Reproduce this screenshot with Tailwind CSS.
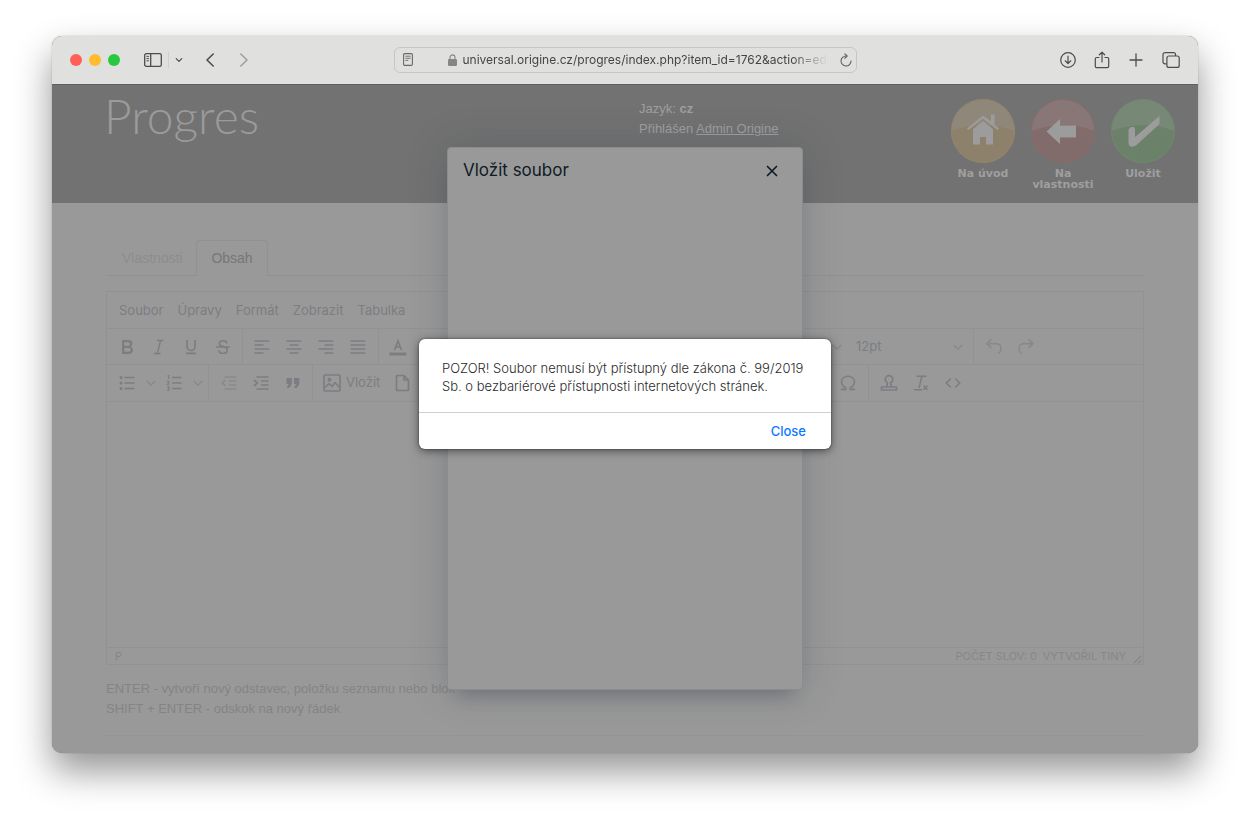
<!DOCTYPE html>
<html lang="cs">
<head>
  <meta charset="UTF-8" />
  <meta name="viewport" content="width=device-width, initial-scale=1.0"/>
  <title>Progres</title>
  <script src="https://cdn.jsdelivr.net/npm/@tailwindcss/browser@4"></script>
</head>

<body class="bg-white font-['Inter',sans-serif] px-[52px] pt-9 pb-16">
  <!-- Browser window -->
  <div class="relative rounded-[10px] overflow-hidden bg-[#999999] shadow-[0_18px_36px_rgba(0,0,0,0.42),0_0_1px_rgba(0,0,0,0.5)]">

    <!-- Title bar -->
    <div class="flex items-center h-[49px] pb-px bg-[#e0e1df] border-b border-[#5f5f5f] text-[#4c4c4c]">
      <div class="flex flex-1 items-center pl-[18px]">
        <div class="flex items-center gap-[7px]">
          <span class="size-3 rounded-full bg-[#ff5f57]"></span>
          <span class="size-3 rounded-full bg-[#febc2e]"></span>
          <span class="size-3 rounded-full bg-[#28c840]"></span>
        </div>
        <button class="ml-6" aria-label="Sidebar">
          <svg class="w-[18px] h-[14px]" viewBox="0 0 18 14" fill="none" stroke="currentColor" stroke-width="1.3"><rect x="0.7" y="0.7" width="16.6" height="12.6" rx="1.6"/><path d="M6.7 1v12"/><path d="M2.5 3.4h2.4M2.5 5.6h2.4M2.5 7.8h2.4" stroke-width="1"/></svg>
        </button>
        <span class="ml-[6px] w-px h-4 bg-[#d0d1cf]"></span>
        <button class="ml-[6px]" aria-label="Tab groups">
          <svg class="w-2 h-2" viewBox="0 0 8 8" fill="none" stroke="currentColor" stroke-width="1.2" stroke-linecap="round" stroke-linejoin="round"><path d="M1.2 2.6 4 5.4l2.8-2.8"/></svg>
        </button>
        <button class="ml-[22px]" aria-label="Back">
          <svg class="w-[10px] h-4" viewBox="0 0 10 16" fill="none" stroke="currentColor" stroke-width="1.6" stroke-linecap="round" stroke-linejoin="round"><path d="M8.2 2 2 8l6.2 6"/></svg>
        </button>
        <button class="ml-6 text-[#9f9f9f]" aria-label="Forward">
          <svg class="w-[10px] h-4" viewBox="0 0 10 16" fill="none" stroke="currentColor" stroke-width="1.6" stroke-linecap="round" stroke-linejoin="round"><path d="M1.8 2 8 8l-6.2 6"/></svg>
        </button>
      </div>
      <div class="flex items-center w-[463px] h-[26px] rounded-md border border-[#c6c7c5] px-2">
        <svg class="w-[10px] h-[13px] shrink-0" viewBox="0 0 10 13" fill="none" stroke="#686868" stroke-width="1.1"><rect x="0.6" y="0.6" width="8.8" height="11.8" rx="1.2"/><path d="M2.3 3.2h5.4M2.3 5.3h5.4M2.3 7.4h3" stroke-width="0.9"/></svg>
        <svg class="w-[9px] h-3 ml-[35px] shrink-0" viewBox="0 0 9 12"><rect x="0" y="5" width="9" height="7" rx="1.2" fill="#858585"/><path d="M2 5.5V3.4a2.5 2.5 0 0 1 5 0v2.1" fill="none" stroke="#858585" stroke-width="1.1"/></svg>
        <input type="text" aria-label="Address" value="universal.origine.cz/progres/index.php?item_id=1762&amp;action=edit" class="ml-[6px] flex-1 min-w-0 h-5 text-xs text-[#454545] bg-transparent outline-none mask-r-from-90% mask-r-to-100%" />
        <button class="ml-3 -mr-1" aria-label="Reload">
          <svg class="w-3 h-[14px]" viewBox="0 0 12 14" fill="none" stroke="#5f5f5f" stroke-width="1.1" stroke-linecap="round" stroke-linejoin="round"><path d="M6.2 3A5 5 0 1 0 11 8"/><path d="M4.8.8 7.2 3 4.8 5.3"/></svg>
        </button>
      </div>
      <div class="flex flex-1 items-center justify-end gap-[18px] pr-[18px]">
        <button aria-label="Downloads">
          <svg class="size-4" viewBox="0 0 16 16" fill="none" stroke="currentColor" stroke-width="1.2" stroke-linecap="round" stroke-linejoin="round"><circle cx="8" cy="8" r="7.3"/><path d="M8 4.2v7.2M5.2 8.8 8 11.5l2.8-2.7"/></svg>
        </button>
        <button aria-label="Share">
          <svg class="w-4 h-[18px]" viewBox="0 0 16 18" fill="none" stroke="currentColor" stroke-width="1.2" stroke-linecap="round" stroke-linejoin="round"><path d="M5 6.5H2.7a1.4 1.4 0 0 0-1.4 1.4v7.4a1.4 1.4 0 0 0 1.4 1.4h10.6a1.4 1.4 0 0 0 1.4-1.4V7.9a1.4 1.4 0 0 0-1.4-1.4H11"/><path d="M8 11V1.3M5.3 3.8 8 1.2l2.7 2.6"/></svg>
        </button>
        <button aria-label="New tab">
          <svg class="size-4" viewBox="0 0 16 16" fill="none" stroke="currentColor" stroke-width="1.3" stroke-linecap="round"><path d="M8 2v12M2 8h12"/></svg>
        </button>
        <button aria-label="Tab overview">
          <svg class="w-[18px] h-4" viewBox="0 0 18 16" fill="none" stroke="currentColor" stroke-width="1.2" stroke-linejoin="round"><rect x="4.9" y="4" width="12.3" height="11.4" rx="2"/><path d="M4.7 11.8H3a2 2 0 0 1-2-2V2.6a2 2 0 0 1 2-2h8.500a2 2 0 0 1 2 2V4"/></svg>
        </button>
      </div>
    </div>

    <!-- Page header -->
    <header class="flex items-start h-[118px] bg-[#727272] text-[#9f9f9f] pl-[52px] pr-[19px] font-['Liberation_Sans',sans-serif]">
      <h1 class="flex-1 pt-[3px] text-5xl leading-[56px] font-light text-[#9b9b9b] font-['Lato',sans-serif]">Progres</h1>
      <div class="w-[308px] pt-[14px] text-[13px] leading-5">
        <p>Jazyk: <b>cz</b></p>
        <p>Přihlášen <a href="#" class="underline">Admin Origine</a></p>
      </div>
      <nav class="flex gap-2 pt-[13px] text-center font-['DejaVu_Sans',sans-serif] font-bold text-[11px] leading-[11px]">
        <a href="#" class="w-[72px] flex flex-col items-center">
          <svg class="size-[66px] opacity-85" viewBox="0 0 66 66">
            <circle cx="33" cy="33" r="32" fill="#94846a"/>
            <path d="M1.500 33a31.500 31.500 0 0 1 63 0q-31-12-63 0z" fill="#968b7d"/>
            <circle cx="33" cy="33" r="31.500" fill="none" stroke="#98886c"/>
            <g fill="#a4a4a4"><path d="M33 17.500 17 30.500l1.500 1.500L33 20.500 47.500 32l1.500-1.500-4.500-3.700V16.500h-3.500v7z"/><path d="M33 23 23 31v15.500h7V39h6v7.500h7V31z"/></g>
          </svg>
          <span class="mt-1">Na úvod</span>
        </a>
        <a href="#" class="w-[72px] flex flex-col items-center">
          <svg class="size-[66px] opacity-85" viewBox="0 0 66 66">
            <circle cx="33" cy="33" r="32" fill="#856a6a"/>
            <path d="M1.500 33a31.500 31.500 0 0 1 63 0q-31-12-63 0z" fill="#8e7777"/>
            <circle cx="33" cy="33" r="31.500" fill="none" stroke="#8a6c6c"/>
            <path d="M16.500 33.500 30 21v6.500h16v12H30V46z" fill="#a4a4a4"/>
          </svg>
          <span class="mt-1">Na vlastnosti</span>
        </a>
        <a href="#" class="w-[72px] flex flex-col items-center">
          <svg class="size-[66px] opacity-85" viewBox="0 0 66 66">
            <circle cx="33" cy="33" r="32" fill="#6a8469"/>
            <path d="M1.500 33a31.500 31.500 0 0 1 63 0q-31-12-63 0z" fill="#788d77"/>
            <circle cx="33" cy="33" r="31.500" fill="none" stroke="#6f8c6e"/>
            <path d="M18.500 32.500q0-2.500 3.500-3.500 3-.5 3 2v8L49.500 18v8L26 47.500q-6.500 3-7.500-2z" fill="#a4a4a4"/>
          </svg>
          <span class="mt-1">Uložit</span>
        </a>
      </nav>
    </header>

    <!-- Page content -->
    <main class="px-[54px] pt-[37px] pb-[17px]">
      <!-- Tabs -->
      <div class="flex h-9 border-b border-[#929292] text-sm font-['Liberation_Sans',sans-serif]">
        <button class="pl-4 w-[90px] text-left text-[#8d8d8d]">Vlastnosti</button>
        <button class="w-[72px] h-9 pb-px rounded-t border border-b-0 border-[#919191] bg-[#999999] text-[#777777]">Obsah</button>
      </div>

      <!-- Editor -->
      <div class="mt-[15px] border border-[#919293] text-[#7b7e81] text-[13px]">
        <div class="flex items-center gap-[14px] h-9 px-3 pt-[2px]">
          <button>Soubor</button>
          <button>Úpravy</button>
          <button>Formát</button>
          <button>Zobrazit</button>
          <button>Tabulka</button>
        </div>

        <!-- Toolbar, first row -->
        <div class="flex h-9 border-t border-[#909294]">
          <div class="flex items-center pl-1 pr-[3px] border-r border-[#909294]">
            <button class="w-8 flex justify-center" aria-label="Bold"><svg class="size-6" viewBox="0 0 24 24" fill="currentColor"><path fill-rule="evenodd" d="M7.8 19c-.3 0-.5 0-.6-.2l-.2-.5V5.7c0-.2 0-.4.2-.5l.6-.2h5c1.5 0 2.7.3 3.5 1 .7.6 1.1 1.4 1.1 2.500a3 3 0 0 1-.6 1.900c-.4.6-1 1-1.6 1.200.4.100.9.300 1.300.6s.8.700 1 1.200c.4.4.5 1 .5 1.600 0 1.300-.4 2.300-1.300 3-.8.700-2.100 1-3.800 1H7.800zm5-8.300c.6 0 1.200-.1 1.600-.5.4-.3.6-.7.6-1.300 0-1.100-.8-1.700-2.300-1.700H9.300v3.500h3.400zm.5 6c.7 0 1.300-.1 1.700-.4.4-.4.6-.9.6-1.500s-.2-1-.7-1.400c-.4-.3-1-.4-2-.4H9.400v3.800h4z"/></svg></button>
            <button class="w-8 flex justify-center" aria-label="Italic"><svg class="size-6" viewBox="0 0 24 24" fill="none" stroke="currentColor" stroke-width="1.4"><path d="M10 5.500h6.500M7 18.500h6.500M13.600 5.500l-3.300 13"/></svg></button>
            <button class="w-8 flex justify-center" aria-label="Underline"><svg class="size-6" viewBox="0 0 24 24" fill="none" stroke="currentColor" stroke-width="1.7"><path d="M8 5v6.500a4 4 0 0 0 8 0V5M7 18.400h10"/></svg></button>
            <button class="w-8 flex justify-center" aria-label="Strikethrough"><svg class="size-6" viewBox="0 0 24 24" fill="none" stroke="currentColor" stroke-width="1.6"><path d="M16 8.500C15.700 6.800 14.200 5.800 12.100 5.800c-2.200 0-3.700 1.100-3.700 2.800 0 1.500 1 2.300 3.600 3 3 .8 4.200 1.800 4.200 3.600 0 1.900-1.700 3.100-4.100 3.100-2.500 0-4.100-1.100-4.400-3M5 12h14"/></svg></button>
          </div>
          <div class="flex items-center pl-[3px] pr-1 border-r border-[#909294]">
            <button class="w-8 flex justify-center" aria-label="Align left"><svg class="size-6" viewBox="0 0 24 24" stroke="currentColor" stroke-width="1.6"><path d="M4.500 6h15M4.500 10h9M4.500 14h15M4.500 18h9"/></svg></button>
            <button class="w-8 flex justify-center" aria-label="Align center"><svg class="size-6" viewBox="0 0 24 24" stroke="currentColor" stroke-width="1.6"><path d="M4.500 6h15M7.500 10h9M4.500 14h15M7.500 18h9"/></svg></button>
            <button class="w-8 flex justify-center" aria-label="Align right"><svg class="size-6" viewBox="0 0 24 24" stroke="currentColor" stroke-width="1.6"><path d="M4.500 6h15M10.500 10h9M4.500 14h15M10.500 18h9"/></svg></button>
            <button class="w-8 flex justify-center" aria-label="Justify"><svg class="size-6" viewBox="0 0 24 24" stroke="currentColor" stroke-width="1.6"><path d="M4.500 6h15M4.500 10h15M4.500 14h15M4.500 18h15"/></svg></button>
          </div>
          <div class="flex items-center pl-[3px] pr-1">
            <button class="w-8 flex justify-center" aria-label="Text color"><svg class="size-6" viewBox="0 0 24 24"><path d="M3.500 17.500h17v3h-17z" fill="currentColor"/><path d="M8.500 15 12 6l3.500 9M9.500 12h5" fill="none" stroke="currentColor" stroke-width="1.7"/></svg></button>
          </div>
          <label class="relative flex-1 flex items-center">
            <select aria-label="Font" class="w-full h-7 appearance-none bg-transparent"><option></option></select>
            <svg class="absolute right-1 size-[10px] pointer-events-none" viewBox="0 0 10 10" fill="none" stroke="#85878a" stroke-width="1.2"><path d="m.8 3 4.200 4.200L9.200 3"/></svg>
          </label>
          <label class="relative flex items-center w-[128px] border-r border-[#909294]">
            <select aria-label="Font size" class="w-full h-7 pl-[10px] appearance-none bg-transparent"><option>12pt</option></select>
            <svg class="absolute right-[10px] size-[10px] pointer-events-none" viewBox="0 0 10 10" fill="none" stroke="#85878a" stroke-width="1.2"><path d="m.8 3 4.200 4.200L9.200 3"/></svg>
          </label>
          <div class="flex items-center w-[169px] px-1 text-[#87898b]">
            <button class="w-8 flex justify-center" aria-label="Undo"><svg class="size-6" viewBox="0 0 24 24" fill="none" stroke="currentColor" stroke-width="1.6" stroke-linecap="round" stroke-linejoin="round"><path d="M9 4.500 5 8.600l4 4M5.300 8.600H14c3 0 5 2 5 4.700 0 1.900-.7 3.500-2 4.800"/></svg></button>
            <button class="w-8 flex justify-center" aria-label="Redo"><svg class="size-6" viewBox="0 0 24 24" fill="none" stroke="currentColor" stroke-width="1.6" stroke-linecap="round" stroke-linejoin="round"><path d="m15 4.500 4 4.100-4 4M18.700 8.600H10c-3 0-5 2-5 4.700 0 1.900.7 3.500 2 4.800"/></svg></button>
          </div>
        </div>

        <!-- Toolbar, second row -->
        <div class="flex h-[38px] border-y border-[#909294]">
          <div class="flex items-center pl-1 pr-[3px] border-r border-[#909294]">
            <button class="w-8 flex justify-center" aria-label="Bullet list"><svg class="size-6" viewBox="0 0 24 24" stroke="currentColor" stroke-width="1.7"><path d="M9.500 6.500h10M9.500 12h10M9.500 17.500h10"/><path d="M6 6.500h.01M6 12h.01M6 17.500h.01" stroke-width="3" stroke-linecap="round"/></svg></button>
            <button class="w-[15px] flex justify-center" aria-label="Bullet styles"><svg class="size-[10px]" viewBox="0 0 10 10" fill="none" stroke="#85878a" stroke-width="1.2"><path d="m.8 3 4.200 4.200L9.200 3"/></svg></button>
            <button class="w-8 flex justify-center" aria-label="Numbered list"><svg class="size-6" viewBox="0 0 24 24" fill="none" stroke="currentColor" stroke-width="1.7"><path d="M10 6.500h9.500M10 12h9.500M10 17.500h9.500"/><path d="M5.500 5 6.700 4.500V8M5 10.600q1-.9 1.900-.2.600.8-1.700 2.900h2.200M5.100 16q2-.8 2 .3 0 .9-1.200.9 1.500 0 1.500 1.200-.2 1.400-2.400.6" stroke-width="1.1"/></svg></button>
            <button class="w-[15px] flex justify-center" aria-label="Number styles"><svg class="size-[10px]" viewBox="0 0 10 10" fill="none" stroke="#85878a" stroke-width="1.2"><path d="m.8 3 4.200 4.200L9.200 3"/></svg></button>
          </div>
          <div class="flex items-center pl-1 pr-[3px] border-r border-[#909294]">
            <button class="w-8 flex justify-center text-[#878a8c]" aria-label="Decrease indent"><svg class="size-6" viewBox="0 0 24 24" fill="none" stroke="currentColor" stroke-width="1.6"><path d="M7.500 6h12M12 10h7.500M12 14h7.500M7.500 18h12M8.500 9l-3.300 3 3.300 3"/></svg></button>
            <button class="w-8 flex justify-center" aria-label="Increase indent"><svg class="size-6" viewBox="0 0 24 24" fill="none" stroke="currentColor" stroke-width="1.7"><path d="M7.500 6h12M12 10h7.500M12 14h7.500M7.500 18h12M5 9l3.300 3L5 15"/></svg></button>
            <button class="w-8 flex justify-center" aria-label="Blockquote"><svg class="size-6" viewBox="0 0 24 24" fill="currentColor"><path d="M5.500 7h5.300v5.500q-.4 3-3 4.500H5.600l2-4H5.500zM13 7h5.300v5.500q-.4 3-3 4.500h-2.200l2-4H13z"/></svg></button>
          </div>
          <div class="flex items-center pl-[3px] pr-1 flex-1 border-r border-[#909294]">
            <button class="w-[70px] shrink-0 flex items-center pl-1" aria-label="Insert image"><svg class="size-6" viewBox="0 0 24 24" fill="none" stroke="currentColor" stroke-width="1.6" stroke-linejoin="round"><rect x="4" y="4" width="16" height="16" rx="1"/><path d="m5 16.500 4-4 3 3 3-4 4.500 5"/><circle cx="9.500" cy="8.800" r="1.200" fill="currentColor"/></svg><span class="ml-[2px]">Vložit</span></button>
            <button class="w-8 flex justify-center shrink-0" aria-label="Insert file"><svg class="size-6" viewBox="0 0 24 24" fill="none" stroke="currentColor" stroke-width="1.7" stroke-linejoin="round"><path d="M14 4.500H7.500a1 1 0 0 0-1 1v13a1 1 0 0 0 1 1h10a1 1 0 0 0 1-1V9zV9h4.500"/></svg></button>
            <button class="w-8 flex justify-center shrink-0 ml-auto" aria-label="Special character"><svg class="size-6" viewBox="0 0 24 24" fill="none" stroke="currentColor" stroke-width="1.6"><path d="M5 18.400h4.700v-1.700C7.200 15.400 5.500 13.300 5.500 10.800 5.500 7.500 8.300 5.200 12 5.200s6.500 2.300 6.500 5.600c0 2.500-1.700 4.600-4.200 5.900v1.700H19"/></svg></button>
          </div>
          <div class="flex items-center w-[274px] px-1">
            <button class="w-8 flex justify-center" aria-label="Stamp"><svg class="size-6" viewBox="0 0 24 24" fill="none" stroke="currentColor" stroke-width="1.7" stroke-linejoin="round"><rect x="4.500" y="16" width="15" height="3"/><path d="M9.500 15.800 10.500 12q-2.300-1.200-2.300-3.500a3.800 3.800 0 0 1 7.600 0q0 2.300-2.300 3.500l1 3.800"/></svg></button>
            <button class="w-8 flex justify-center" aria-label="Clear formatting"><svg class="size-6" viewBox="0 0 24 24" fill="none" stroke="currentColor" stroke-width="1.5"><path d="M7.500 5.200h10M13 5.200 10 17M5 18.700h8M14.500 14.800l4 4M18.500 14.800l-4 4"/></svg></button>
            <button class="w-8 flex justify-center" aria-label="Source code"><svg class="size-6" viewBox="0 0 24 24" fill="none" stroke="currentColor" stroke-width="1.6"><path d="m9.800 7.500-4.500 4.500 4.500 4.500M14.200 7.500l4.500 4.500-4.500 4.500"/></svg></button>
          </div>
        </div>

        <div class="h-[245px]"></div>

        <!-- Status bar -->
        <div class="flex items-center h-[17px] pl-2 border-t border-[#909294] text-[11px] text-[#878787]">
          <span class="flex-1">P</span>
          <span>POČET SLOV: 0</span>
          <a href="#" class="ml-[6px]">VYTVOŘIL TINY</a>
          <svg class="ml-[7px] mt-[6px] mr-px w-[9px] h-[9px]" viewBox="0 0 9 9" stroke="currentColor" stroke-width="1.2"><path d="M.5 8.500l8-8M5 8.500l3.500-3.500"/></svg>
        </div>
      </div>

      <div class="mt-[14px] text-[13px] leading-5 text-[#848484] font-['Liberation_Sans',sans-serif]">
        <p>ENTER - vytvoří nový odstavec, položku seznamu nebo blok</p>
        <p>SHIFT + ENTER - odskok na nový řádek</p>
      </div>
      <hr class="mt-4 border-[#949494]" />
    </main>

    <!-- Insert file dialog -->
    <div role="dialog" aria-labelledby="dialog-title" class="absolute left-1/2 top-[111px] -translate-x-1/2 w-[356px] h-[543px] rounded-sm border border-[#8a8c8e] bg-[#999999] shadow-[0_16px_16px_-10px_rgba(34,47,62,0.25),0_0_40px_1px_rgba(34,47,62,0.18)]">
      <div class="flex items-center justify-between h-[46px] pl-[15px] pr-6 text-[#101b26]">
        <h2 id="dialog-title" class="text-[17px]">Vložit soubor</h2>
        <button aria-label="Zavřít"><svg class="size-3" viewBox="0 0 12 12" fill="none" stroke="currentColor" stroke-width="1.7" stroke-linecap="round"><path d="m1.500 1.500 9 9M10.500 1.500l-9 9"/></svg></button>
      </div>
    </div>

    <!-- Alert -->
    <div role="alertdialog" class="absolute left-1/2 top-[303px] -translate-x-1/2 w-[412px] rounded-md bg-white shadow-[0_2px_8px_rgba(0,0,0,0.5),0_0_2px_rgba(0,0,0,0.5)]">
      <p class="h-[73px] pt-5 pl-[23px] text-[13px] leading-[18px] font-light text-[#2a2a2a]">POZOR! Soubor nemusí být přístupný dle zákona č. 99/2019<br>Sb. o bezbariérové přístupnosti internetových stránek.</p>
      <div class="flex items-center justify-end h-[37px] pt-[2px] pr-[25px] border-t border-[#cfcfcf]">
        <button class="text-[13px] font-medium text-[#0a7aff]">Close</button>
      </div>
    </div>
  </div>
</body>
</html>
